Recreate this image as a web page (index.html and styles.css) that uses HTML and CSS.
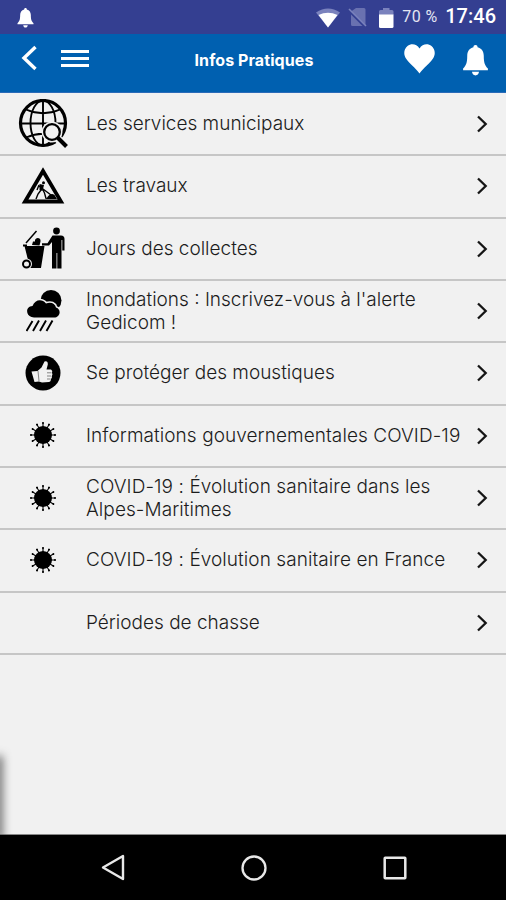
FILE: index.html
```html
<!DOCTYPE html>
<html lang="fr">
<head>
  <meta charset="UTF-8">
  <meta name="viewport" content="width=device-width, initial-scale=1.0">
  <title>Infos Pratiques</title>
  <link rel="stylesheet" href="styles.css">
</head>
<body>

<svg class="sprite" width="0" height="0">
  <symbol id="bell" viewBox="0 0 24 30">
    <path d="M12 0c1.300 0 2 .9 2 2.100C18 3 20 6.300 20 10.500c0 7 1.200 9.500 4 12.300v1.700H0v-1.700c2.800-2.800 4-5.300 4-12.300C4 6.300 6 3 10 2.100 10 .9 10.700 0 12 0zM8.600 26h6.800c-.3 2.300-1.600 3.400-3.400 3.400S8.900 28.300 8.600 26z"/>
  </symbol>
  <symbol id="chevron" viewBox="0 0 12 18">
    <path d="M2 1.500L9.700 9L2 16.500" fill="none" stroke="#151515" stroke-width="2.300"/>
  </symbol>
  <symbol id="virus" viewBox="-14 -14 28 28">
    <circle r="9"/>
    <g stroke="#000" stroke-width="1.100">
      <path d="M0-12.500V12.500M-12.500 0H12.500"/>
      <path d="M0-12.500V12.500M-12.500 0H12.500" transform="rotate(30)"/>
      <path d="M0-12.500V12.500M-12.500 0H12.500" transform="rotate(60)"/>
    </g>
    <g stroke="#000" stroke-width="2" stroke-linecap="round">
      <path d="M0-12v0M0 12v0M-12 0h0M12 0h0"/>
      <path d="M0-12v0M0 12v0M-12 0h0M12 0h0" transform="rotate(30)"/>
      <path d="M0-12v0M0 12v0M-12 0h0M12 0h0" transform="rotate(60)"/>
    </g>
  </symbol>
</svg>

<div class="screen">
  <div class="status-bar">
    <svg class="status-bell" width="17" height="20"><use href="#bell"/></svg>
    <div class="status-right">
      <svg class="wifi" width="24" height="20" viewBox="0 0 24 20">
        <path d="M0 4.500Q12-3.500 24 4.500L12 19.500z" fill="#7a82bd"/>
        <path d="M2.500 7Q12 2.500 21.500 7L12 19.500z" fill="#fff"/>
      </svg>
      <svg class="sim" width="19" height="19" viewBox="0 0 19 19">
        <path d="M8 0h8q1.500 0 1.500 1.500V17L3 3.500zM3 6.500L14.500 18H4.500Q3 18 3 16.500z" fill="#6971b0"/>
        <path d="M1 1L18 18" stroke="#7a82bd" stroke-width="1.600"/>
      </svg>
      <svg class="battery" width="15" height="20" viewBox="0 0 15 20">
        <path d="M0 3.500q0-1.500 1.500-1.500H4V0h6.500v2H13q1.500 0 1.500 1.500V7H0z" fill="#7a82bd"/>
        <path d="M0 6.500h14.500v12q0 1.500-1.500 1.500H1.500Q0 20 0 18.500z" fill="#fff"/>
      </svg>
      <span class="percent">70 %</span>
      <span class="clock">17:46</span>
    </div>
  </div>

  <div class="header">
    <svg class="back" width="18" height="26" viewBox="0 0 18 26"><path d="M15.500 2L4 13L15.500 24" fill="none" stroke="#fff" stroke-width="3.400"/></svg>
    <div class="menu"><span></span><span></span><span></span></div>
    <h1>Infos Pratiques</h1>
    <svg class="heart" width="31" height="30" viewBox="0 0 31 30"><path d="M15.500 4.500C18.500-.5 24-.8 27.500 2c3.800 3.200 4.200 8.700 1.500 12.500C26 19 20 23.500 15.500 29.500 11 23.500 5 19 2 14.500-.7 10.700-.3 5.200 3.500 2 7-.8 12.500-.5 15.500 4.500z"/></svg>
    <svg class="alert" width="25" height="31"><use href="#bell"/></svg>
  </div>

  <div class="list">
    <div class="item">
      <div class="icon">
        <svg width="50" height="50" viewBox="0 0 50 50">
          <g fill="none" stroke="#000">
            <circle cx="25" cy="24" r="22.500" stroke-width="3.200"/>
            <path d="M25 2v44M2 24.500h45M8 10.500Q25 18 42 10.500M8 38.500Q25 31 42 38.500" stroke-width="1.900"/>
            <ellipse cx="25" cy="24" rx="12.500" ry="22.500" stroke-width="1.900"/>
          </g>
          <path d="M40 40L48 48" stroke="#f1f1f1" stroke-width="8"/>
          <circle cx="34" cy="33" r="10.500" fill="#f1f1f1"/>
          <circle cx="34" cy="33" r="7.800" fill="#f1f1f1" stroke="#000" stroke-width="2.300"/>
          <path d="M39.500 38.500L48.500 47.500" stroke="#000" stroke-width="4"/>
        </svg>
      </div>
      <span class="label">Les services municipaux</span>
      <svg class="arrow" width="12" height="18"><use href="#chevron"/></svg>
    </div>

    <div class="item">
      <div class="icon">
        <svg width="44" height="40" viewBox="0 0 44 40">
          <path d="M22 5L40 35.500H4z" fill="none" stroke="#000" stroke-width="3.800"/>
          <circle cx="22.500" cy="16.800" r="1.500"/>
          <path d="M22 24l1.500 3 1.500 5.500M20 24l-3 4-2 5M18 19l-2 5M18 20l12 9" fill="none" stroke="#000" stroke-width="1.400"/>
          <path d="M18.500 18l4.500 1-1.500 6-3-1z"/>
          <path d="M23.500 33c3-.5 3-3 5-4 2-1.500 3-1.500 5 0l2.500 4z"/>
        </svg>
      </div>
      <span class="label">Les travaux</span>
      <svg class="arrow" width="12" height="18"><use href="#chevron"/></svg>
    </div>

    <div class="item">
      <div class="icon">
        <svg class="bin" width="44" height="42" viewBox="0 0 44 42">
          <path d="M4 16L14.500 4" stroke="#000" stroke-width="1.500"/>
          <path d="M2.500 19h20l-3.500 22H8zM1 17.500h4v2H1z"/>
          <path d="M10 18l1-3.500h2q-.5-3 2.500-3.500 3.500 0 3 3.500l-1 4z"/>
          <circle cx="4.500" cy="37" r="5.500" fill="#f1f1f1"/>
          <circle cx="4.500" cy="37" r="3.500" fill="none" stroke="#000" stroke-width="2"/>
          <circle cx="34.500" cy="4" r="3.400"/>
          <path d="M30.500 8.500H39Q42.500 8.500 42.500 12V23.500H40.300V13H39.500V41.500H35.300V26H34.500V41.500H30V15L27 18.500H20V16.300H25.500z"/>
        </svg>
      </div>
      <span class="label">Jours des collectes</span>
      <svg class="arrow" width="12" height="18"><use href="#chevron"/></svg>
    </div>

    <div class="item">
      <div class="icon">
        <svg class="rain" width="36" height="43" viewBox="0 0 36 43">
          <circle cx="25" cy="11.500" r="10.500"/>
          <path d="M5.500 28C-.5 26-.5 17.500 6.500 17 9 10.500 16 9.500 20 14.500 25 12.500 29 14.500 30 18.500 36 20.500 34 28.500 28 28.500H8z" stroke="#f1f1f1" stroke-width="3"/>
          <path d="M5.500 28C-.5 26-.5 17.500 6.500 17 9 10.500 16 9.500 20 14.500 25 12.500 29 14.500 30 18.500 36 20.500 34 28.500 28 28.500H8z"/>
          <path d="M6.500 32L.5 42M13 31.500L7 42M20 31.500L14 42M26.500 31.500L20.500 42" stroke="#000" stroke-width="1.900"/>
        </svg>
      </div>
      <span class="label">Inondations : Inscrivez-vous à l'alerte Gedicom !</span>
      <svg class="arrow" width="12" height="18"><use href="#chevron"/></svg>
    </div>

    <div class="item">
      <div class="icon">
        <svg width="36" height="36" viewBox="0 0 36 36">
          <circle cx="18" cy="18" r="17.500"/>
          <path d="M6.500 16.500l6-.5 4-3.500 3-6q3.500-1 3.300 3L21.500 14.500h4.500q2 1.500 1 3.300 1 1.700-.2 3.200.6 2-.8 3-.2 3-2.200 3L17 27.500l-3-1-4.500 .5z" fill="#f1f1f1"/>
          <path d="M13 16l1 10M22 17.800h4.500M22 21h4M22 24h3.500" stroke="#555" stroke-width=".7"/>
        </svg>
      </div>
      <span class="label">Se protéger des moustiques</span>
      <svg class="arrow" width="12" height="18"><use href="#chevron"/></svg>
    </div>

    <div class="item">
      <div class="icon"><svg width="28" height="28"><use href="#virus"/></svg></div>
      <span class="label wide">Informations gouvernementales COVID-19</span>
      <svg class="arrow" width="12" height="18"><use href="#chevron"/></svg>
    </div>

    <div class="item">
      <div class="icon"><svg width="28" height="28"><use href="#virus"/></svg></div>
      <span class="label wide">COVID-19 : Évolution sanitaire dans les Alpes-Maritimes</span>
      <svg class="arrow" width="12" height="18"><use href="#chevron"/></svg>
    </div>

    <div class="item">
      <div class="icon"><svg width="28" height="28"><use href="#virus"/></svg></div>
      <span class="label wide">COVID-19 : Évolution sanitaire en France</span>
      <svg class="arrow" width="12" height="18"><use href="#chevron"/></svg>
    </div>

    <div class="item">
      <div class="icon"></div>
      <span class="label">Périodes de chasse</span>
      <svg class="arrow" width="12" height="18"><use href="#chevron"/></svg>
    </div>
  </div>

  <div class="rest"><div class="drawer-edge"></div></div>

  <div class="nav-bar">
    <svg width="24" height="27" viewBox="0 0 24 27"><path d="M22 2v23L2 13.500z" fill="none" stroke="#e8e8e8" stroke-width="2.400" stroke-linejoin="round"/></svg>
    <svg width="26" height="26" viewBox="0 0 26 26"><circle cx="13" cy="13" r="11.500" fill="none" stroke="#e8e8e8" stroke-width="2.300"/></svg>
    <svg width="24" height="24" viewBox="0 0 24 24"><rect x="1.700" y="1.700" width="20.600" height="20.600" rx=".5" fill="none" stroke="#e8e8e8" stroke-width="2.500"/></svg>
  </div>
</div>

</body>
</html>
```
FILE: styles.css
```css
* {
  box-sizing: border-box;
}
body {
  margin: 0;
  font-family: Inter, "Liberation Sans", sans-serif;
  background-color: #f1f1f1;
}
.sprite {
  display: none;
}
.screen {
  display: flex;
  flex-direction: column;
  width: 506px;
  height: 900px;
  overflow: hidden;
}
.status-bar {
  display: flex;
  justify-content: space-between;
  flex: none;
  height: 34px;
  padding: 0 10px 0 17px;
  background-color: #343f91;
  color: #fff;
  font-family: Roboto, sans-serif;
}
.status-bell {
  margin-top: 8px;
  fill: #fff;
}
.status-right {
  display: flex;
  align-items: flex-start;
}
.wifi {
  margin-top: 8px;
}
.sim {
  margin: 8px 0 0 8px;
}
.battery {
  margin: 8px 0 0 12px;
}
.percent {
  width: 36px;
  margin: 6px 0 0 8px;
  font-size: 16px;
  line-height: 21px;
  letter-spacing: 0.400px;
  white-space: nowrap;
  color: #e3e5f2;
}
.clock {
  margin: 4px 0 0 7px;
  font-size: 20px;
  font-weight: 500;
  line-height: 24px;
}
.header {
  display: flex;
  align-items: flex-start;
  flex: none;
  height: 59px;
  padding: 0 18px 0 20px;
  background-color: #0060b0;
  border-bottom: 1px solid #2a6bb8;
}
.back {
  margin-top: 11px;
}
.menu {
  display: flex;
  flex-direction: column;
  gap: 4px;
  width: 28px;
  margin: 16px 0 0 23px;
}
.menu span {
  height: 3px;
  background-color: #fff;
}
.header h1 {
  flex: 1;
  margin: 16px 0 0 14px;
  font-size: 16px;
  font-weight: 700;
  line-height: 20px;
  letter-spacing: 0.080px;
  text-align: center;
  color: #fff;
}
.heart {
  margin: 10px 1px 0 -1px;
  fill: #fff;
}
.alert {
  margin: 11px 0 0 27px;
  fill: #fff;
}
.list {
  flex: none;
  padding-top: 1px;
}
.item {
  display: flex;
  align-items: center;
  height: 62.330px;
  padding-bottom: 1px;
  border-bottom: 2px solid #c6c6c6;
}
.icon {
  display: flex;
  justify-content: center;
  width: 86px;
}
.bin,
.rain {
  margin-left: 2px;
}
.label {
  flex: 1;
  font-size: 19px;
  font-weight: 300;
  line-height: 23px;
  color: #1c1c1c;
}
.wide {
  letter-spacing: 0.070px;
}
.arrow {
  margin: 1px 18px 0 0;
}
.rest {
  display: flex;
  align-items: flex-end;
  flex: 1;
  border-bottom: 1px solid #888;
}
.drawer-edge {
  width: 3px;
  height: 80px;
  margin-left: -3px;
  box-shadow: 0 4px 10px 2px #555;
}
.nav-bar {
  display: flex;
  justify-content: space-between;
  align-items: center;
  flex: none;
  height: 65px;
  padding: 0 99px 0 101px;
  background-color: #000;
}
```
